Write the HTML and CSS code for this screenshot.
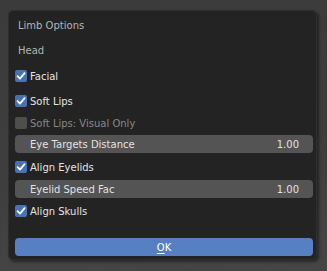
FILE: index.html
```html
<!DOCTYPE html>
<html>
<head>
<meta charset="utf-8">
<link rel="stylesheet" href="styles.css">
</head>
<body>
<div class="panel">
  <div class="row label first">Limb Options</div>
  <div class="row label gap5">Head</div>
  <div class="row check gap6"><span class="box on"><svg viewBox="0 0 12 12"><path d="M2.6 6.2 L5 8.6 L9.6 3.2" /></svg></span><span>Facial</span></div>
  <div class="row check gap5"><span class="box on"><svg viewBox="0 0 12 12"><path d="M2.6 6.2 L5 8.6 L9.6 3.2" /></svg></span><span>Soft Lips</span></div>
  <div class="row check disabled gap2"><span class="box"></span><span>Soft Lips: Visual Only</span></div>
  <div class="field gap2"><span>Eye Targets Distance</span><span>1.00</span></div>
  <div class="row check gap4"><span class="box on"><svg viewBox="0 0 12 12"><path d="M2.6 6.2 L5 8.6 L9.6 3.2" /></svg></span><span>Align Eyelids</span></div>
  <div class="field gap3"><span>Eyelid Speed Fac</span><span>1.00</span></div>
  <div class="row check gap3"><span class="box on"><svg viewBox="0 0 12 12"><path d="M2.6 6.2 L5 8.6 L9.6 3.2" /></svg></span><span>Align Skulls</span></div>
  <div class="ok"><span><u>O</u>K</span></div>
</div>
</body>
</html>
```
FILE: styles.css
```css
html, body {
  margin: 0;
  padding: 0;
}
body {
  width: 327px;
  height: 271px;
  overflow: hidden;
  background: linear-gradient(175deg, #3b3b3b 0%, #3e3e3e 60%, #464646 100%);
  font-family: "DejaVu Sans", sans-serif;
  font-size: 10px;
}
.panel {
  box-sizing: border-box;
  margin: 10px 0 0 8px;
  width: 309px;
  height: 250px;
  background: #232323;
  border: 1px solid #2f2f2f;
  border-radius: 5px;
  box-shadow: 2px 2px 3px rgba(0, 0, 0, 0.45);
  padding: 4px 3px 0 6px;
  display: flex;
  flex-direction: column;
}
.row {
  height: 20px;
  display: flex;
  align-items: center;
}
.label {
  color: #b4b4b4;
  padding-left: 3px;
}
.gap2 { margin-top: 2px; }
.gap3 { margin-top: 3px; }
.gap4 { margin-top: 4px; }
.gap5 { margin-top: 5px; }
.gap6 { margin-top: 6px; }
.check {
  color: #e4e4e4;
  gap: 3px;
}
.box {
  box-sizing: border-box;
  width: 12px;
  height: 12px;
  border-radius: 2px;
  background: #595959;
  display: flex;
}
.box.on {
  background: #4772b3;
}
.box svg {
  width: 12px;
  height: 12px;
}
.box path {
  fill: none;
  stroke: #ffffff;
  stroke-width: 1.8;
  stroke-linecap: round;
  stroke-linejoin: round;
}
.disabled {
  color: #888888;
}
.disabled .box {
  background: #4e4e4e;
}
.field {
  height: 18px;
  background: #545454;
  border-radius: 4px;
  color: #e2e2e2;
  display: flex;
  align-items: center;
  justify-content: space-between;
  padding: 0 14px 0 15px;
}
.ok {
  margin-top: 17px;
  height: 18px;
  background: #5680c2;
  border-radius: 4px;
  color: #ffffff;
  display: flex;
  align-items: center;
  justify-content: center;
}
.ok u {
  text-decoration-thickness: 1px;
  text-underline-offset: 2px;
}
```
